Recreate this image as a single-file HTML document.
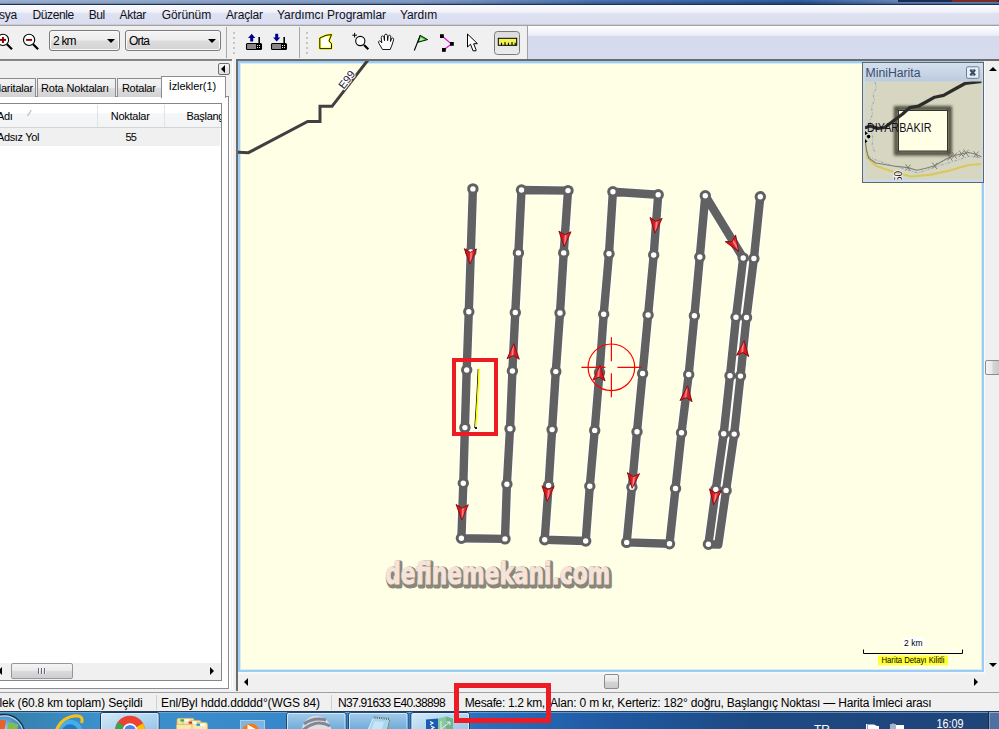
<!DOCTYPE html>
<html><head><meta charset="utf-8">
<style>
html,body{margin:0;padding:0;}
body{width:999px;height:729px;overflow:hidden;position:relative;background:#f0f0f0;font-family:"Liberation Sans","DejaVu Sans",sans-serif;font-size:12px;color:#000;}
.abs{position:absolute;}
#title{left:0;top:0;width:999px;height:5px;background:linear-gradient(rgba(255,255,255,0.12) 0,rgba(255,255,255,0) 55%,rgba(20,40,80,0.25) 75%,#1c3158 82%,#1c3158 100%),linear-gradient(90deg,#90a7c7 0,#7590ba 42%,#3a62a0 60%,#1f4b8b 80%,#5878ae 90%);}
#capbtn{left:898px;top:0;width:101px;height:2px;background:linear-gradient(90deg,#1a2c50 0,#1a2c50 53%,#7a2c22 54%,#7a2c22 98%,#1a2c50 99%);}
#menubar{left:0;top:5px;width:999px;height:20px;background:linear-gradient(#fcfcfe 0,#f0f1f9 36%,#dfe2f2 42%,#d9ddef 100%);}
#menubar span{position:absolute;top:3px;font-size:12px;white-space:nowrap;color:#101020;}
#tbline{left:0;top:24px;width:999px;height:2px;background:linear-gradient(#c9cbd6 0,#c9cbd6 50%,#a2a2a2 50%,#a2a2a2 100%);}
#toolbar{left:0;top:26px;width:527px;height:33px;background:#f0f0f0;}
#tbrest{left:527px;top:26px;width:472px;height:33px;background:linear-gradient(#ffffff 0,#eceef7 28%,#d5daec 32%,#d6dbed 100%);border-left:1px solid #a0a0a0;box-sizing:border-box;}
#tbbottom{left:0;top:59px;width:232px;height:2px;background:linear-gradient(#7c7c7c,#8e8e8e);}
.combo{position:absolute;top:30px;height:21px;box-sizing:border-box;border:1px solid #7a7a7a;border-radius:3px;background:linear-gradient(#f4f4f4 0,#ececec 48%,#dddddd 52%,#d2d2d2 100%);box-shadow:inset 0 0 0 1px #fafafa;}
.combo span{position:absolute;left:3px;top:3px;font-size:12px;letter-spacing:-0.8px;}
.combo i{position:absolute;right:4px;top:8px;width:0;height:0;border-left:4px solid transparent;border-right:4px solid transparent;border-top:4px solid #000;}
.vsep{position:absolute;top:27px;width:1px;height:31px;background:#a8a8a8;}
.grip{position:absolute;top:32px;width:2px;height:22px;background:repeating-linear-gradient(#c4c4c4 0,#c4c4c4 2px,transparent 2px,transparent 5px);}
#leftpanel{left:0;top:61px;width:232px;height:629px;background:#f0f0f0;}
#map{left:236px;top:59px;width:748px;height:613px;background:#ffffe6;box-sizing:border-box;border:0 solid #6c6c6c;border-left-width:2px;border-top-width:2px;overflow:hidden;}
#mapin{position:absolute;left:0;top:0;right:0;bottom:0;box-shadow:inset 0 0 0 2px #9ccdf6,inset 0 0 0 3px #d8ecf0;}
#vscroll{left:985px;top:59px;width:14px;height:613px;background:#f0f0f0;}
#hscroll{left:236px;top:674px;width:748px;height:16px;background:#f0f0f0;}
#status{left:0;top:692px;width:999px;height:20px;background:#f0f0f0;border-top:1px solid #a0a0a0;box-sizing:border-box;}
#status span{position:absolute;top:3px;font-size:12px;white-space:nowrap;}
#taskbar{left:0;top:712px;width:999px;height:17px;background:linear-gradient(#6f98c8 0,#3a6aa5 20%,#2a5a96 100%);}

#pane{left:-5px;top:96px;width:234px;height:593px;background:#fff;border:1px solid #898c95;box-sizing:border-box;}
.tab{position:absolute;top:78px;height:19px;box-sizing:border-box;border:1px solid #898c95;border-bottom:0;background:linear-gradient(#f4f4f4 0,#ebebeb 50%,#dddddd 52%,#d2d2d2 100%);font-size:11px;white-space:nowrap;}
.tab span{position:absolute;top:3px;}
#tabact{position:absolute;left:161px;top:76px;width:65px;height:22px;box-sizing:border-box;border:1px solid #898c95;border-bottom:0;background:#fff;font-size:11px;}
#tabact span{position:absolute;left:6.7px;top:3px;white-space:nowrap;}
#list{left:-5px;top:103px;width:227px;height:578px;background:#fff;border:1px solid #828790;box-sizing:border-box;font-size:11px;overflow:hidden;}
#lhead{position:absolute;left:0;top:0;width:225px;height:23px;background:linear-gradient(#ffffff 0,#ffffff 40%,#f5f6f7 42%,#f3f4f5 100%);border-bottom:1px solid #d5d5d5;}
#lhead b{position:absolute;top:1px;width:1px;height:22px;background:#e0e3e8;}
#lhead span,#lrow span{position:absolute;white-space:nowrap;}
#lrow{position:absolute;left:0;top:24px;width:224px;height:18px;background:#f0f0f0;}
#lscroll{position:absolute;left:0;bottom:0;width:225px;height:17px;background:#f0f0f0;}
#lthumb{position:absolute;left:15px;top:0px;width:62px;height:16px;box-sizing:border-box;border:1px solid #979797;border-radius:2px;background:linear-gradient(#f5f5f5 0,#e9e9eb 48%,#d9dadc 52%,#cfcfd1 100%);}
#colbtn{left:218px;top:63px;width:12px;height:12px;box-sizing:border-box;border:1px solid #707070;border-radius:2px;background:linear-gradient(#f6f6f6,#dcdcdc);}
.tri-l{position:absolute;width:0;height:0;border-top:4px solid transparent;border-bottom:4px solid transparent;border-right:4px solid #000;}
.tri-r{position:absolute;width:0;height:0;border-top:4px solid transparent;border-bottom:4px solid transparent;border-left:4px solid #000;}
#split1{left:232px;top:61px;width:1px;height:629px;background:#fff;}
#split0{left:229px;top:98px;width:2px;height:592px;background:#fff;}

#maptop{left:236px;top:59px;width:763px;height:2px;background:#6c6c6c;}
.sthumb{position:absolute;box-sizing:border-box;border:1px solid #8c8c8c;border-radius:2px;}
.tri-u{position:absolute;width:0;height:0;border-left:4px solid transparent;border-right:4px solid transparent;border-bottom:4px solid #000;}
.tri-d{position:absolute;width:0;height:0;border-left:4px solid transparent;border-right:4px solid transparent;border-top:4px solid #000;}
#gapw{left:984px;top:61px;width:1px;height:612px;background:#fafafa;}
#gaph{left:236px;top:672px;width:749px;height:2px;background:#f8f8f8;}
#redbox2{left:454px;top:683px;width:97px;height:40px;box-sizing:border-box;border:5px solid #ed1c24;}
#status b{position:absolute;top:2px;width:1px;height:15px;background:#d0d0d0;}
#lthumb i{position:absolute;left:26px;top:4px;width:8px;height:6px;background:repeating-linear-gradient(90deg,#606a78 0,#606a78 1px,#f4f4f4 1px,#f4f4f4 2px,transparent 2px,transparent 3px);}
#mapleft2{z-index:5;left:236px;top:672px;width:2px;height:19px;background:#6c6c6c;}
</style></head><body>
<div id="title" class="abs"></div>
<div id="capbtn" class="abs"></div>
<div id="menubar" class="abs">
<span style="left:-16px;letter-spacing:-0.2px">Dosya</span><span style="left:32.5px;letter-spacing:-0.40px">Düzenle</span><span style="left:88.8px;letter-spacing:-0.53px">Bul</span><span style="left:119.5px;letter-spacing:-0.30px">Aktar</span><span style="left:161.8px;letter-spacing:-0.11px">Görünüm</span><span style="left:226.0px;letter-spacing:-0.15px">Araçlar</span><span style="left:277.0px;letter-spacing:-0.04px">Yardımcı Programlar</span><span style="left:400.0px;letter-spacing:-0.13px">Yardım</span>
</div>
<div id="tbline" class="abs"></div>
<div id="toolbar" class="abs"></div>
<div id="tbrest" class="abs"></div>
<div id="tbbottom" class="abs"></div>
<div class="combo" style="left:49px;width:71px"><span>2 km</span><i></i></div>
<div class="combo" style="left:125px;width:96px"><span>Orta</span><i></i></div>
<div class="vsep" style="left:226px"></div><div class="grip" style="left:233px"></div>
<div class="vsep" style="left:299px"></div><div class="grip" style="left:306px"></div>
<svg id="toolsvg" width="530" height="34" viewBox="0 26 530 34" style="position:absolute;left:0;top:26px">
<circle cx="3.0" cy="39.9" r="5.6" fill="#fff" stroke="#000" stroke-width="1.1"/>
<path d="M7.0,44.2 l5,5" stroke="#000" stroke-width="2.2"/>
<path d="M0.0,39.9 h6" stroke="#8a0000" stroke-width="1.9"/>
<path d="M3.0,36.9 v6" stroke="#8a0000" stroke-width="1.9"/>
<circle cx="29.1" cy="39.9" r="5.6" fill="#fff" stroke="#000" stroke-width="1.1"/>
<path d="M33.1,44.2 l5,5" stroke="#000" stroke-width="2.2"/>
<path d="M26.1,39.9 h6" stroke="#8a0000" stroke-width="1.9"/>
<rect x="246.5" y="43.5" width="15" height="6" rx="1" fill="#888" stroke="#000" stroke-width="1.1"/>
<rect x="256.0" y="44" width="5" height="5" fill="#000"/>
<path d="M257.0,45.5 h1 m1,0 h1 M257.0,47.5 h1 m1,0 h1" stroke="#fff" stroke-width="0.9"/>
<path d="M259.2,43 v-6" stroke="#000" stroke-width="1.6"/>
<path d="M251.7,33.8 l3.6,4.2 h-2.1 v3.6 h-3 v-3.6 h-2.1z" fill="#000090"/>
<rect x="271.5" y="43.5" width="15" height="6" rx="1" fill="#888" stroke="#000" stroke-width="1.1"/>
<rect x="281.0" y="44" width="5" height="5" fill="#000"/>
<path d="M282.0,45.5 h1 m1,0 h1 M282.0,47.5 h1 m1,0 h1" stroke="#fff" stroke-width="0.9"/>
<path d="M284.2,43 v-6" stroke="#000" stroke-width="1.6"/>
<path d="M276.7,41.6 l3.6,-4.2 h-2.1 v-3.6 h-3 v3.6 h-2.1z" fill="#000090"/>
<path d="M319.8,38 L326,35.3 L331.5,34.6 L329,41 L331.5,43.6 L331.5,48.6 L319.8,48.6 Z" fill="#fff" stroke="#ffff00" stroke-width="2.2" stroke-linejoin="miter"/>
<path d="M319.8,38 L326,35.3 L331.5,34.6 L329,41 L331.5,43.6 L331.5,48.6 L319.8,48.6 Z" fill="none" stroke="#000" stroke-width="0.9"/>
<circle cx="360.3" cy="41" r="4.6" fill="#fff" stroke="#000" stroke-width="1.1"/><path d="M364,45 l4.3,4.3" stroke="#000" stroke-width="2.2"/><path d="M352.3,35.2 h4.6 m-2.3,-2.3 v4.6" stroke="#000" stroke-width="1"/>
<path d="M382.5,49.5 L379,43.5 q-1.3,-2.3 0.4,-2.6 q1.2,0 2.4,2 L381.2,37.5 q0.2,-1.8 1.5,-1.6 q1,0.1 1.3,1.8 l0.5,3 l0,-5 q0.2,-1.6 1.5,-1.6 q1.2,0 1.4,1.6 l0.2,5 l0.6,-4.2 q0.4,-1.5 1.5,-1.3 q1.2,0.2 1.1,1.8 l-0.3,4.5 l0.9,-2.6 q0.6,-1.3 1.5,-1 q1,0.4 0.7,1.9 L392,45 L390.2,49.5 Z" fill="#fff" stroke="#000" stroke-width="0.9" stroke-linejoin="round"/>
<path d="M414.3,50.5 L420.3,35.2" stroke="#000" stroke-width="1.1"/><path d="M420.3,35.4 L427.6,39.6 L417.8,42.3 Z" fill="#30d030" stroke="#000" stroke-width="0.9" stroke-linejoin="round"/><path d="M420.5,37.5 L424.5,39.6 L419.5,41 Z" fill="#b0f0b0"/>
<path d="M442,36 L451.5,44 L443.5,50" fill="none" stroke="#e010e0" stroke-width="1.1"/><rect x="440" y="34.2" width="3.8" height="3.8" fill="#000"/><rect x="450" y="42" width="3.8" height="3.8" fill="#000"/><rect x="442" y="48" width="3.8" height="3.8" fill="#000"/>
<path d="M467.5,34 L467.5,47 L470.5,44.2 L473,50.8 L476,50.8 L476,49.5 L473.6,43.8 L477.4,43.6 Z" fill="#fff" stroke="#000" stroke-width="1" stroke-linejoin="miter"/>
<defs><linearGradient id="rb" x1="0" y1="0" x2="0" y2="1"><stop offset="0" stop-color="#dcdcdc"/><stop offset="1" stop-color="#ececec"/></linearGradient><pattern id="yd" width="2" height="2" patternUnits="userSpaceOnUse"><rect width="2" height="2" fill="#ffff00"/><rect width="1" height="1" fill="#e8e8a0"/><rect x="1" y="1" width="1" height="1" fill="#e8e8a0"/></pattern></defs>
<rect x="494.5" y="31.5" width="25" height="23" rx="3" fill="url(#rb)" stroke="#7a7a7a" stroke-width="1"/>
<rect x="498.3" y="38.3" width="18.4" height="7" fill="url(#yd)" stroke="#000" stroke-width="1"/>
<path d="M501.5,45.3 v-2.6 M505,45.3 v-3.2 M508.5,45.3 v-2.6 M512,45.3 v-3.2 M515.2,45.3 v-2.6" stroke="#000" stroke-width="1.1"/>
</svg>
<div id="leftpanel" class="abs"></div>
<div id="pane" class="abs"></div>
<div class="tab" style="left:-20px;width:56px"><span style="left:12.2px;letter-spacing:-0.2px">Haritalar</span></div>
<div class="tab" style="left:37px;width:79px"><span style="left:3px;letter-spacing:-0.17px">Rota Noktaları</span></div>
<div class="tab" style="left:117px;width:45px"><span style="left:3.9px;letter-spacing:-0.24px">Rotalar</span></div>
<div id="tabact"><span style="letter-spacing:-0.09px">İzlekler(1)</span></div>
<div id="colbtn" class="abs"><div class="tri-l" style="left:2px;top:1px"></div></div>
<div id="list" class="abs">
 <div id="lhead"><span style="left:1px;top:6px;letter-spacing:-0.3px">Adı</span><span style="left:33px;top:4px;color:#888;font-size:9px">⁄</span><b style="left:101px"></b><span style="left:114.7px;top:6px;letter-spacing:-0.25px">Noktalar</span><b style="left:168px"></b><span style="left:190.5px;top:6px;letter-spacing:-0.3px">Başlangıç</span></div>
 <div id="lrow"><span style="left:1px;top:3px;letter-spacing:-0.36px">Adsız Yol</span><span style="left:129.5px;top:3px;letter-spacing:-0.8px">55</span></div>
 <div id="lscroll"><div class="tri-l" style="left:2px;top:4px"></div><div id="lthumb"><i></i></div><div class="tri-r" style="left:214px;top:4px"></div></div>
</div>
<div id="split1" class="abs"></div><div id="split0" class="abs"></div>
<div id="map" class="abs"><div id="mapin"></div><svg id="mapsvg" width="748" height="612" viewBox="0 0 748 612" style="position:absolute;left:0;top:0">
<defs><linearGradient id="ag" x1="0" y1="0" x2="1" y2="0"><stop offset="0" stop-color="#c81018"/><stop offset="0.3" stop-color="#e82a2e"/><stop offset="0.44" stop-color="#ff8c8c"/><stop offset="0.56" stop-color="#e02024"/><stop offset="1" stop-color="#b80c14"/></linearGradient>
<g id="arr"><path d="M0,-7.7 L6.1,7.6 L0,4.1 L-6.1,7.6 Z" fill="url(#ag)" stroke="#8a0a10" stroke-width="0.9" stroke-linejoin="round"/></g></defs>
<path d="M-1.0,91.3 L10.4,91.7 L69.7,60.4 L82.0,60.4 L82.0,45.3 L94.0,45.3 L130.0,-1.0" fill="none" stroke="#404040" stroke-width="3" stroke-linejoin="miter"/>
<text transform="translate(108.5,18.5) rotate(-52)" font-family="Liberation Sans, sans-serif" font-size="11" text-anchor="middle" fill="#202040" stroke="#fff" stroke-width="2" paint-order="stroke" y="4">E99</text>
<path d="M234.9,127.9 L232.8,191.0 L230.8,250.7 L228.7,309.0 L226.9,366.6 L225.3,422.2 L223.4,477.3 L267.0,477.9 L268.9,423.2 L272.0,367.8 L274.4,310.0 L277.3,251.5 L280.4,191.9 L283.5,129.0 L330.0,129.6 L325.7,191.9 L322.0,252.0 L317.8,310.6 L314.1,368.6 L310.6,424.4 L306.7,478.8 L347.7,480.0 L351.8,425.3 L356.7,369.4 L361.5,311.5 L365.7,253.3 L371.0,192.7 L374.9,130.8 L420.2,133.7 L415.7,194.0 L410.1,254.0 L404.6,312.5 L399.0,370.7 L393.9,426.3 L388.7,481.4 L431.5,482.7 L437.5,427.5 L443.5,371.8 L450.7,313.5 L456.4,254.8 L461.8,196.0 L467.3,134.7 L505.2,197.0 L498.0,256.3 L492.0,314.7 L485.7,372.8 L477.8,428.5 L470.4,483.3 L480.3,483.6 L488.1,429.4 L496.2,373.1 L502.5,315.1 L508.5,256.5 L515.9,197.5 L522.3,135.7" fill="none" stroke="#ffffff" stroke-width="10.6" stroke-linejoin="round" stroke-linecap="round"/>
<path d="M234.9,127.9 L232.8,191.0 L230.8,250.7 L228.7,309.0 L226.9,366.6 L225.3,422.2 L223.4,477.3 L267.0,477.9 L268.9,423.2 L272.0,367.8 L274.4,310.0 L277.3,251.5 L280.4,191.9 L283.5,129.0 L330.0,129.6 L325.7,191.9 L322.0,252.0 L317.8,310.6 L314.1,368.6 L310.6,424.4 L306.7,478.8 L347.7,480.0 L351.8,425.3 L356.7,369.4 L361.5,311.5 L365.7,253.3 L371.0,192.7 L374.9,130.8 L420.2,133.7 L415.7,194.0 L410.1,254.0 L404.6,312.5 L399.0,370.7 L393.9,426.3 L388.7,481.4 L431.5,482.7 L437.5,427.5 L443.5,371.8 L450.7,313.5 L456.4,254.8 L461.8,196.0 L467.3,134.7 L505.2,197.0 L498.0,256.3 L492.0,314.7 L485.7,372.8 L477.8,428.5 L470.4,483.3 L480.3,483.6 L488.1,429.4 L496.2,373.1 L502.5,315.1 L508.5,256.5 L515.9,197.5 L522.3,135.7" fill="none" stroke="#616161" stroke-width="8.4" stroke-linejoin="round" stroke-linecap="round"/>
<circle cx="234.9" cy="127.9" r="4.2" fill="#fff" stroke="#616161" stroke-width="3"/>
<circle cx="232.8" cy="191.0" r="4.2" fill="#fff" stroke="#616161" stroke-width="3"/>
<circle cx="230.8" cy="250.7" r="4.2" fill="#fff" stroke="#616161" stroke-width="3"/>
<circle cx="228.7" cy="309.0" r="4.2" fill="#fff" stroke="#616161" stroke-width="3"/>
<circle cx="226.9" cy="366.6" r="4.2" fill="#fff" stroke="#616161" stroke-width="3"/>
<circle cx="225.3" cy="422.2" r="4.2" fill="#fff" stroke="#616161" stroke-width="3"/>
<circle cx="223.4" cy="477.3" r="4.2" fill="#fff" stroke="#616161" stroke-width="3"/>
<circle cx="267.0" cy="477.9" r="4.2" fill="#fff" stroke="#616161" stroke-width="3"/>
<circle cx="268.9" cy="423.2" r="4.2" fill="#fff" stroke="#616161" stroke-width="3"/>
<circle cx="272.0" cy="367.8" r="4.2" fill="#fff" stroke="#616161" stroke-width="3"/>
<circle cx="274.4" cy="310.0" r="4.2" fill="#fff" stroke="#616161" stroke-width="3"/>
<circle cx="277.3" cy="251.5" r="4.2" fill="#fff" stroke="#616161" stroke-width="3"/>
<circle cx="280.4" cy="191.9" r="4.2" fill="#fff" stroke="#616161" stroke-width="3"/>
<circle cx="283.5" cy="129.0" r="4.2" fill="#fff" stroke="#616161" stroke-width="3"/>
<circle cx="330.0" cy="129.6" r="4.2" fill="#fff" stroke="#616161" stroke-width="3"/>
<circle cx="325.7" cy="191.9" r="4.2" fill="#fff" stroke="#616161" stroke-width="3"/>
<circle cx="322.0" cy="252.0" r="4.2" fill="#fff" stroke="#616161" stroke-width="3"/>
<circle cx="317.8" cy="310.6" r="4.2" fill="#fff" stroke="#616161" stroke-width="3"/>
<circle cx="314.1" cy="368.6" r="4.2" fill="#fff" stroke="#616161" stroke-width="3"/>
<circle cx="310.6" cy="424.4" r="4.2" fill="#fff" stroke="#616161" stroke-width="3"/>
<circle cx="306.7" cy="478.8" r="4.2" fill="#fff" stroke="#616161" stroke-width="3"/>
<circle cx="347.7" cy="480.0" r="4.2" fill="#fff" stroke="#616161" stroke-width="3"/>
<circle cx="351.8" cy="425.3" r="4.2" fill="#fff" stroke="#616161" stroke-width="3"/>
<circle cx="356.7" cy="369.4" r="4.2" fill="#fff" stroke="#616161" stroke-width="3"/>
<circle cx="361.5" cy="311.5" r="4.2" fill="#fff" stroke="#616161" stroke-width="3"/>
<circle cx="365.7" cy="253.3" r="4.2" fill="#fff" stroke="#616161" stroke-width="3"/>
<circle cx="371.0" cy="192.7" r="4.2" fill="#fff" stroke="#616161" stroke-width="3"/>
<circle cx="374.9" cy="130.8" r="4.2" fill="#fff" stroke="#616161" stroke-width="3"/>
<circle cx="420.2" cy="133.7" r="4.2" fill="#fff" stroke="#616161" stroke-width="3"/>
<circle cx="415.7" cy="194.0" r="4.2" fill="#fff" stroke="#616161" stroke-width="3"/>
<circle cx="410.1" cy="254.0" r="4.2" fill="#fff" stroke="#616161" stroke-width="3"/>
<circle cx="404.6" cy="312.5" r="4.2" fill="#fff" stroke="#616161" stroke-width="3"/>
<circle cx="399.0" cy="370.7" r="4.2" fill="#fff" stroke="#616161" stroke-width="3"/>
<circle cx="393.9" cy="426.3" r="4.2" fill="#fff" stroke="#616161" stroke-width="3"/>
<circle cx="388.7" cy="481.4" r="4.2" fill="#fff" stroke="#616161" stroke-width="3"/>
<circle cx="431.5" cy="482.7" r="4.2" fill="#fff" stroke="#616161" stroke-width="3"/>
<circle cx="437.5" cy="427.5" r="4.2" fill="#fff" stroke="#616161" stroke-width="3"/>
<circle cx="443.5" cy="371.8" r="4.2" fill="#fff" stroke="#616161" stroke-width="3"/>
<circle cx="450.7" cy="313.5" r="4.2" fill="#fff" stroke="#616161" stroke-width="3"/>
<circle cx="456.4" cy="254.8" r="4.2" fill="#fff" stroke="#616161" stroke-width="3"/>
<circle cx="461.8" cy="196.0" r="4.2" fill="#fff" stroke="#616161" stroke-width="3"/>
<circle cx="467.3" cy="134.7" r="4.2" fill="#fff" stroke="#616161" stroke-width="3"/>
<circle cx="505.2" cy="197.0" r="4.2" fill="#fff" stroke="#616161" stroke-width="3"/>
<circle cx="498.0" cy="256.3" r="4.2" fill="#fff" stroke="#616161" stroke-width="3"/>
<circle cx="492.0" cy="314.7" r="4.2" fill="#fff" stroke="#616161" stroke-width="3"/>
<circle cx="485.7" cy="372.8" r="4.2" fill="#fff" stroke="#616161" stroke-width="3"/>
<circle cx="477.8" cy="428.5" r="4.2" fill="#fff" stroke="#616161" stroke-width="3"/>
<circle cx="470.4" cy="483.3" r="4.2" fill="#fff" stroke="#616161" stroke-width="3"/>
<circle cx="488.1" cy="429.4" r="4.2" fill="#fff" stroke="#616161" stroke-width="3"/>
<circle cx="496.2" cy="373.1" r="4.2" fill="#fff" stroke="#616161" stroke-width="3"/>
<circle cx="502.5" cy="315.1" r="4.2" fill="#fff" stroke="#616161" stroke-width="3"/>
<circle cx="508.5" cy="256.5" r="4.2" fill="#fff" stroke="#616161" stroke-width="3"/>
<circle cx="515.9" cy="197.5" r="4.2" fill="#fff" stroke="#616161" stroke-width="3"/>
<circle cx="522.3" cy="135.7" r="4.2" fill="#fff" stroke="#616161" stroke-width="3"/>
<use href="#arr" transform="translate(232.2,195.4) rotate(181.5)"/>
<use href="#arr" transform="translate(326.5,178.0) rotate(183.5)"/>
<use href="#arr" transform="translate(275.5,290.4) rotate(2.5)"/>
<use href="#arr" transform="translate(361.5,312.0) rotate(4.0)"/>
<use href="#arr" transform="translate(417.5,164.5) rotate(184.5)"/>
<use href="#arr" transform="translate(496.5,183.8) rotate(148.0)"/>
<use href="#arr" transform="translate(448.8,332.6) rotate(6.0)"/>
<use href="#arr" transform="translate(505.4,287.4) rotate(6.0)"/>
<use href="#arr" transform="translate(224.0,451.2) rotate(181.5)"/>
<use href="#arr" transform="translate(309.6,432.7) rotate(183.5)"/>
<use href="#arr" transform="translate(394.8,419.7) rotate(185.0)"/>
<use href="#arr" transform="translate(476.6,436.2) rotate(187.5)"/>
<rect x="216.0" y="299.0" width="42" height="74" fill="none" stroke="#ed1c24" stroke-width="4"/>
<path d="M240.2,308.0 L239.2,329.0 L238.0,349.0 L236.8,367.0" fill="none" stroke="#000" stroke-width="1"/>
<path d="M241.2,308.0 L240.2,329.0 L239.0,349.0 L237.8,366.0" fill="none" stroke="#ffff00" stroke-width="1.6"/>
<rect x="237.0" y="366.0" width="2" height="2" fill="#0000d0"/>
<g stroke="#ff0000" stroke-width="1.2" fill="none"><circle cx="373.4" cy="306.3" r="23.3"/>
<path d="M343.4,306.3 H367.4 M379.4,306.3 H403.4 M373.4,276.3 V300.3 M373.4,312.3 V336.3"/></g>
</svg><svg id="oversvg" width="748" height="612" viewBox="0 0 748 612" style="position:absolute;left:0;top:0">
<defs><clipPath id="mmclip"><rect x="627.0" y="20.5" width="116.5" height="98.3"/></clipPath>
<linearGradient id="mmt" x1="0" y1="0" x2="0" y2="1"><stop offset="0" stop-color="#d4e0ee"/><stop offset="1" stop-color="#bccbdd"/></linearGradient>
<filter id="bl" x="-20%" y="-20%" width="140%" height="140%"><feGaussianBlur stdDeviation="1.4"/></filter></defs>
<text x="148.8" y="524.8" font-family="DejaVu Sans, Liberation Sans, sans-serif" font-weight="bold" font-size="29.5" textLength="225" lengthAdjust="spacingAndGlyphs" fill="#8a877a" stroke="#8a877a" stroke-width="5" stroke-linejoin="round">definemekani.com</text>
<text x="147.3" y="523.3" font-family="DejaVu Sans, Liberation Sans, sans-serif" font-weight="bold" font-size="29.5" textLength="225" lengthAdjust="spacingAndGlyphs" fill="#f6e3d9" stroke="#f6e3d9" stroke-width="1" stroke-linejoin="round">definemekani.com</text>
<rect x="664.5" y="576.5" width="22" height="10" fill="#fff"/>
<text x="675.3" y="584.6" font-family="Liberation Sans, sans-serif" font-size="8.5" text-anchor="middle" fill="#000">2 km</text>
<path d="M625.5,588.5 V592.5 H724.5 V588.5" fill="none" stroke="#000" stroke-width="1"/>
<rect x="640.0" y="594.3" width="70" height="10" fill="#ffff33"/>
<text x="675.0" y="602.2" font-family="Liberation Sans, sans-serif" font-size="8.5" text-anchor="middle" fill="#000" textLength="63" lengthAdjust="spacingAndGlyphs">Harita Detayı Kilitli</text>
<rect x="624.5" y="1.5" width="121" height="120" fill="#c9dbef" stroke="#666" stroke-width="1"/>
<rect x="627.0" y="2.0" width="117" height="18.5" fill="url(#mmt)"/>
<text x="627.5" y="16.0" font-family="Liberation Sans, sans-serif" font-size="12.5" fill="#3c4c70" textLength="55" lengthAdjust="spacingAndGlyphs">MiniHarita</text>
<rect x="728.5" y="5.8" width="12.5" height="11.5" rx="1.5" fill="#e6eef6" stroke="#6a7c96" stroke-width="1"/>
<path d="M732.2,9.0 l5,5 m0,-5 l-5,5" stroke="#3a4a60" stroke-width="1.8" fill="none"/>
<path d="M732.2,9.0 h5 m-5,5 h5" stroke="#3a4a60" stroke-width="1" fill="none"/>
<g clip-path="url(#mmclip)">
<rect x="627.0" y="20.5" width="117" height="98.5" fill="#d7d7c1"/>
<path d="M637.0,21.0 L638.5,27.0 L635.0,33.0 L636.5,39.0 L633.5,46.0 L634.5,53.0 L632.0,60.0 L633.0,69.0 L635.0,77.0 L634.0,85.0 L637.0,91.0" fill="none" stroke="#8aa0c8" stroke-width="0.9" stroke-dasharray="3 1.5 1 1.5"/>
<path d="M630.0,95.0 L638.0,99.0 L652.0,104.0 L667.0,108.0 L680.0,112.0 L694.0,107.0 L707.0,103.0 L720.0,99.0 L732.0,95.0 L743.0,97.0" fill="none" stroke="#8aa0c8" stroke-width="0.9" stroke-dasharray="3 1.5 1 1.5"/>
<path d="M627.0,77.0 L628.0,89.0 L629.5,97.0 L637.8,104.8 L655.7,111.0 L673.5,115.5 L691.3,113.8 L712.7,109.3 L730.5,104.0 L744.0,103.0" fill="none" stroke="#d9c862" stroke-width="2.2" stroke-linejoin="round"/>
<path d="M627.0,79.0 L628.5,89.0 L630.7,97.0 L637.8,102.0 L655.7,105.0 L670.0,106.6 L678.8,109.3 L687.0,107.5 L696.6,104.8 L707.3,98.6 L714.5,95.0 L723.0,93.0 L730.5,91.5 L737.0,93.0 L744.0,96.0" fill="none" stroke="#808078" stroke-width="1.1" stroke-linejoin="round"/>
<path d="M670.0,106.6 l-2.4,-3.4 m2.4,3.4 l2.4,3.4 M670.0,106.6 l2.6,-3 m-2.6,3 l-2.6,3" stroke="#707068" stroke-width="0.8" fill="none"/>
<path d="M696.6,104.8 l-2.4,-3.4 m2.4,3.4 l2.4,3.4 M696.6,104.8 l2.6,-3 m-2.6,3 l-2.6,3" stroke="#707068" stroke-width="0.8" fill="none"/>
<path d="M712.0,96.5 l-2.4,-3.4 m2.4,3.4 l2.4,3.4 M712.0,96.5 l2.6,-3 m-2.6,3 l-2.6,3" stroke="#707068" stroke-width="0.8" fill="none"/>
<path d="M716.5,94.5 l-2.4,-3.4 m2.4,3.4 l2.4,3.4 M716.5,94.5 l2.6,-3 m-2.6,3 l-2.6,3" stroke="#707068" stroke-width="0.8" fill="none"/>
<path d="M723.5,93.0 l-2.4,-3.4 m2.4,3.4 l2.4,3.4 M723.5,93.0 l2.6,-3 m-2.6,3 l-2.6,3" stroke="#707068" stroke-width="0.8" fill="none"/>
<path d="M728.0,91.8 l-2.4,-3.4 m2.4,3.4 l2.4,3.4 M728.0,91.8 l2.6,-3 m-2.6,3 l-2.6,3" stroke="#707068" stroke-width="0.8" fill="none"/>
<path d="M738.0,93.5 l-2.4,-3.4 m2.4,3.4 l2.4,3.4 M738.0,93.5 l2.6,-3 m-2.6,3 l-2.6,3" stroke="#707068" stroke-width="0.8" fill="none"/>
<rect x="658.2" y="47.3" width="53.5" height="45" fill="none" stroke="#505042" stroke-width="4.6" filter="url(#bl)"/>
<rect x="660.5" y="49.5" width="49" height="40.5" fill="#ffffe6" stroke="#34342a" stroke-width="1"/>
<path d="M744.0,20.5 L727.0,22.5 L717.0,28.0 L705.6,34.4 L696.6,36.2 L688.0,41.0 L680.6,45.0 L671.7,46.6 L664.6,53.0 L653.9,61.0 L646.7,66.5 L639.6,67.4 L632.0,65.0 L628.0,66.5" fill="none" stroke="#2c2c2c" stroke-width="3.2" stroke-linejoin="round" stroke-linecap="round"/>
<circle cx="630.6" cy="75.6" r="1.8" fill="#000"/>
<path d="M627.0,70.0 l3,2.5 l-3,1.5 z M627.0,78.0 l2.5,2.5 l-2.5,1.5z" fill="#000"/>
<text x="629.0" y="71.0" font-family="Liberation Sans, sans-serif" font-size="12.5" fill="#101020" textLength="64.5" lengthAdjust="spacingAndGlyphs">DIYARBAKIR</text>
<text transform="translate(663.5,121.0) rotate(-90)" font-family="Liberation Sans, sans-serif" font-size="10" fill="#101020" stroke="#fff" stroke-width="1.6" paint-order="stroke">50</text>
</g>
</svg></div>
<div id="mapleft2" class="abs"></div><div id="vscroll" class="abs"><div class="tri-u" style="left:4px;top:8px"></div><div class="sthumb" style="left:0;top:301px;width:15px;height:15px;background:linear-gradient(90deg,#f4f4f4 0,#e8e8ea 48%,#d6d6d9 52%,#cbcbce 100%)"></div><div class="tri-d" style="left:4px;top:604px"></div></div><div id="maptop" class="abs"></div><div id="gapw" class="abs"></div><div id="gaph" class="abs"></div>
<div id="hscroll" class="abs"><div class="tri-l" style="left:8px;top:4px"></div><div class="sthumb" style="left:368px;top:0px;width:15px;height:15px;background:linear-gradient(#f4f4f4 0,#e8e8ea 48%,#d6d6d9 52%,#cbcbce 100%)"></div><div class="tri-r" style="left:738px;top:4px"></div></div>
<div id="status" class="abs">
<span style="left:-19.2px;letter-spacing:-0.16px">1 İzlek (60.8 km toplam) Seçildi</span><span style="left:161.0px;letter-spacing:-0.12px">Enl/Byl hddd.ddddd°(WGS 84)</span><span style="left:338.0px;letter-spacing:-0.69px">N37.91633 E40.38898</span><span style="left:464.7px;letter-spacing:-0.35px">Mesafe: 1.2 km,</span><span style="left:550.0px;letter-spacing:-0.19px">Alan: 0 m kr, Kerteriz: 182° doğru, Başlangıç Noktası — Harita İmleci arası</span>
<b style="left:156px"></b><b style="left:331px"></b><b style="left:457px"></b></div>
<svg id="tasksvg" width="999" height="18" viewBox="0 711 999 18" style="position:absolute;left:0;top:711px">
<defs>
<linearGradient id="tbg" x1="0" y1="0" x2="1" y2="0"><stop offset="0" stop-color="#327fa8"/><stop offset="0.1" stop-color="#3d90cc"/><stop offset="0.465" stop-color="#3080c8"/><stop offset="0.475" stop-color="#2870c0"/><stop offset="0.62" stop-color="#20589f"/><stop offset="0.75" stop-color="#1e4a84"/><stop offset="1" stop-color="#1f4478"/></linearGradient>
<linearGradient id="tbtn" x1="0" y1="0" x2="0" y2="1"><stop offset="0" stop-color="#b9d9f0"/><stop offset="1" stop-color="#5fa3d6"/></linearGradient>
<linearGradient id="tbtn2" x1="0" y1="0" x2="1" y2="1"><stop offset="0" stop-color="#d6eaf8"/><stop offset="1" stop-color="#8cc0e6"/></linearGradient>
<radialGradient id="orb" cx="0.5" cy="0.35" r="0.6"><stop offset="0" stop-color="#9fd0ee"/><stop offset="0.6" stop-color="#3f86c0"/><stop offset="1" stop-color="#1d4c7c"/></radialGradient>
<clipPath id="tclip"><rect x="0" y="711" width="999" height="18"/></clipPath>
</defs>
<g clip-path="url(#tclip)">
<rect x="0" y="711" width="999" height="18" fill="url(#tbg)"/>
<rect x="0" y="711" width="999" height="1" fill="#27405f"/>
<rect x="0" y="712" width="999" height="1" fill="#7fb0d8" opacity="0.7"/>
<rect x="100.5" y="712.5" width="58.5" height="24" rx="2" fill="url(#tbtn2)" stroke="#1d3f66" stroke-width="1" opacity="1"/>
<rect x="101.5" y="713.5" width="56.5" height="24" rx="1.5" fill="none" stroke="#e4f2fc" stroke-width="1" opacity="0.75"/>
<rect x="286.5" y="712.5" width="59.5" height="24" rx="2" fill="url(#tbtn)" stroke="#1d3f66" stroke-width="1" opacity="0.85"/>
<rect x="287.5" y="713.5" width="57.5" height="24" rx="1.5" fill="none" stroke="#e4f2fc" stroke-width="1" opacity="0.75"/>
<rect x="348.5" y="712.5" width="59.5" height="24" rx="2" fill="url(#tbtn)" stroke="#1d3f66" stroke-width="1" opacity="0.85"/>
<rect x="349.5" y="713.5" width="57.5" height="24" rx="1.5" fill="none" stroke="#e4f2fc" stroke-width="1" opacity="0.75"/>
<rect x="411.0" y="712.5" width="58.5" height="24" rx="2" fill="url(#tbtn2)" stroke="#1d3f66" stroke-width="1" opacity="1"/>
<rect x="412.0" y="713.5" width="56.5" height="24" rx="1.5" fill="none" stroke="#e4f2fc" stroke-width="1" opacity="0.75"/>
<circle cx="4" cy="735.5" r="21" fill="url(#orb)" stroke="#16304e" stroke-width="1.4"/>
<circle cx="4" cy="735.5" r="19.6" fill="none" stroke="#bfe0f4" stroke-width="1.2" opacity="0.85"/>
<path d="M-4,722 q5,-3 10,-1.5 l-1.5,9 h-9 z" fill="#e8602a"/><path d="M8.5,723 q5,-1 10,1.5 l-2,6 h-9.5 z" fill="#7fc04a"/>
<circle cx="70" cy="732.5" r="10.5" fill="#1e7cc4" stroke="#45aee8" stroke-width="4.5"/>
<path d="M56.5,730 Q62,717 76,715.8 Q84,716 81.5,723" fill="none" stroke="#f6c21a" stroke-width="3"/>
<circle cx="130" cy="730.7" r="15" fill="#ea4335"/><path d="M130,730.7 L143,723.2 A15,15 0 0 1 145,730.7 L145,740 L130,740 Z" fill="#fbbc05"/><path d="M130,730.7 L118,722 A15,15 0 0 0 115,730.7 L115,740 L130,740 Z" fill="#34a853"/>
<circle cx="130" cy="730.7" r="7.4" fill="#fff"/><circle cx="130" cy="730.7" r="5.8" fill="#4285f4"/>
<rect x="177" y="718.3" width="17" height="12" rx="1.5" fill="#f3e2a0" stroke="#cfb45e" stroke-width="0.7"/>
<rect x="183" y="720.6" width="18" height="10" rx="1.5" fill="#f5e6aa" stroke="#cfb45e" stroke-width="0.7"/>
<rect x="176.5" y="724.5" width="31" height="8" rx="1" fill="#f6e8b0" stroke="#cfb45e" stroke-width="0.7"/>
<rect x="192" y="722.6" width="15.3" height="8" rx="1.5" fill="#f6e8b0" stroke="#cfb45e" stroke-width="0.7"/>
<rect x="193" y="724.6" width="13.6" height="5" fill="#f6e8b0"/>
<rect x="180.5" y="719.3" width="3.4" height="2.2" fill="#22b14c"/><rect x="184.5" y="719.3" width="5" height="2.2" fill="#fff"/><rect x="188.6" y="721.5" width="3.4" height="2.2" fill="#d83030"/><rect x="192.6" y="721.5" width="4" height="2" fill="#fff"/><rect x="196.5" y="723.6" width="3.4" height="2.2" fill="#1e90e8"/><rect x="200.5" y="723.6" width="4.5" height="2.2" fill="#fff"/>
<rect x="240.5" y="720.5" width="24" height="12" fill="#7fb4e0" stroke="#a8cdea" stroke-width="1"/>
<circle cx="250.6" cy="732" r="8.6" fill="#f07c18"/><path d="M247.5,724.5 l8,4.5 h-8z" fill="#fff"/>
<circle cx="316.5" cy="731" r="15" fill="#dedede"/><path d="M304,724 q10,-7 22,-4 M302,731 q14,-13 28,-5" fill="none" stroke="#85859a" stroke-width="3"/>
<path d="M373.6,717.6 L389.8,719.2 L386.5,731 L367.5,731 Z" fill="#a6d6ee" stroke="#def0f8" stroke-width="1"/><path d="M374.5,721 L384,722 L381,731 L371,731Z" fill="#c4e6f6"/><path d="M373.6,717.4 L389.8,719" stroke="#56646e" stroke-width="2" stroke-dasharray="1 0.8"/><path d="M389.8,719.4 L387,731" stroke="#8a7a5a" stroke-width="1"/>
<path d="M426,719.6 l12,-1 v13 h-12z" fill="#1a5cb4"/><path d="M438,718.4 l8,-2 l7,2.4 v13 h-15z" fill="#86c8a2"/><path d="M446,716.4 l7,2.4 v13 h-7z" fill="#6fb48c"/><path d="M430,721.5 l3,1.6 l-3,1.6 M431,726 l3,1.6 l-3,1.6" stroke="#fff" fill="none" stroke-width="1.1"/><path d="M441,729 l9,-7 m-3.4,0 h3.4 v3.2 M441,729 v-8" stroke="#eef8f0" fill="none" stroke-width="0.9"/>
<text x="814" y="734" font-family="Liberation Sans, sans-serif" font-size="12" fill="#fff">TR</text>
<path d="M866,729 v-5 h1.5 v5z M868,724.5 h6 l3,1.5 h2 v3 h-11z" fill="#fff"/>
<path d="M891,729 v-5 M893,729 v-5.5 M895,729 v-5" stroke="#fff" stroke-width="1.2"/><path d="M896,725 h8 v4 h-8z" fill="#fff"/>
<text x="936.5" y="727.6" font-family="Liberation Sans, sans-serif" font-size="12" fill="#fff" textLength="27" lengthAdjust="spacingAndGlyphs">16:09</text>
<rect x="989.5" y="712.5" width="12" height="20" fill="#5b7cab" stroke="#9db4d2" stroke-width="1" opacity="0.8"/><rect x="988" y="711" width="1" height="18" fill="#162c4c"/>
</g></svg>
<div id="redbox2" class="abs"></div>
</body></html>
